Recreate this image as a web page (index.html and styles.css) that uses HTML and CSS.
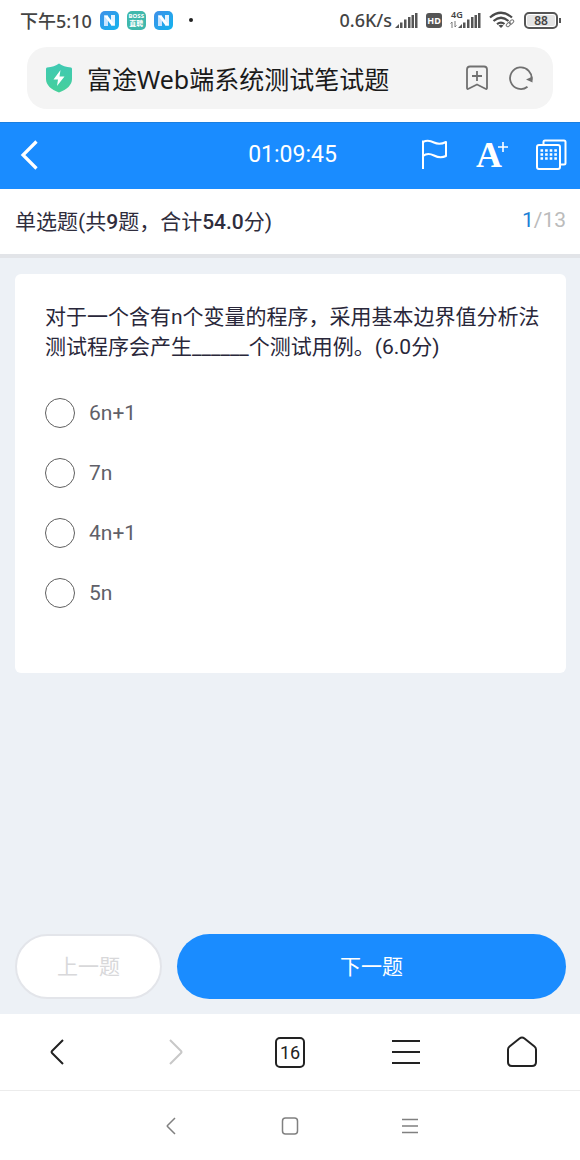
FILE: index.html
```html
<!DOCTYPE html>
<html lang="zh-CN">
<head>
  <meta charset="UTF-8">
  <title>富途Web端系统测试笔试题</title>
  <meta name="viewport" content="width=device-width, initial-scale=1">
  <link rel="stylesheet" href="styles.css">
</head>
<body>
  <svg class="defs" width="0" height="0" aria-hidden="true">
    <defs>
      <linearGradient id="blue" x1="0" y1="0" x2="1" y2="1">
        <stop offset="0" stop-color="#3f8fe8"/>
        <stop offset="1" stop-color="#12b4ee"/>
      </linearGradient>
      <linearGradient id="green" x1="0" y1="0" x2="0" y2="1">
        <stop offset="0" stop-color="#3fc9b4"/>
        <stop offset="1" stop-color="#45d09a"/>
      </linearGradient>
      <symbol id="app-n" viewBox="0 0 19 19">
        <rect width="19" height="19" rx="5" fill="url(#blue)"/>
        <path d="M4 4.500h4v10.500H4z" fill="#c9e4ff"/>
        <path d="M11 4h4v10.500h-4z" fill="#e6f3ff"/>
        <path d="M4 4.500h3.500l7.500 10h-3.500z" fill="#fff"/>
      </symbol>
      <symbol id="signal" viewBox="0 0 23 17">
        <path d="M0 16l4-4v4zM5 10.500h2.500V16H5zM9 7.500h2.500V16H9zM13 5h2.500v11H13zM16.500 3H19v13h-2.500zM20 1h2.500v15H20z" fill="#555"/>
      </symbol>
    </defs>
  </svg>

  <!-- Phone status bar -->
  <div class="status-bar">
    <div class="status-left">
      <span class="clock">下午5:10</span>
      <svg width="19" height="19"><use href="#app-n"/></svg>
      <span class="boss"><span>BOSS</span><span>直聘</span></span>
      <svg width="19" height="19"><use href="#app-n"/></svg>
      <span class="dot"></span>
    </div>
    <div class="status-right">
      <span class="speed">0.6K/s</span>
      <svg width="23" height="17"><use href="#signal"/></svg>
      <span class="hd">HD</span>
      <span class="mobile">
        <span class="net">4G</span>
        <svg class="arrows" width="7" height="7" viewBox="0 0 7 7"><path d="M2 7V1L.5 2.500M5 0v6l1.500-1.500" fill="none" stroke="#777" stroke-width="1"/></svg>
        <svg width="23" height="17"><use href="#signal"/></svg>
      </span>
      <svg class="wifi" width="27" height="18" viewBox="0 0 27 18" fill="none" stroke="#4a4a4a">
        <path d="M1 6.500Q12 -3 23 6.500M4.500 10Q12 3.500 19.500 10M8 13.200Q12 10 15.500 13" stroke-width="2.200"/>
        <path d="M9.500 14.500Q12 13 14.500 14.500L12 17z" fill="#4a4a4a" stroke="none"/>
        <rect x="17" y="12" width="5" height="3" rx="1.500" transform="rotate(-42 19.500 13.500)" stroke="#777" stroke-width="1"/>
        <rect x="20" y="9.500" width="5" height="3" rx="1.500" transform="rotate(-42 22.500 11)" stroke="#777" stroke-width="1"/>
      </svg>
      <span class="battery"><span class="level">88</span></span>
    </div>
  </div>

  <!-- Browser address bar -->
  <div class="address">
    <svg width="28" height="30" viewBox="0 0 28 30">
      <path d="M14 0.500C17 3 21 4 26 4.500q1 .2 1 1.500V16c0 6-5 10.500-13 13.500C6 26.500 1 22 1 16V6q0-1.300 1-1.500C7 4 11 3 14 .5z" fill="url(#green)"/>
      <path d="M15.500 7L8.500 16.500h4.500L12 23l7.500-9.500h-5z" fill="#fff"/>
    </svg>
    <span class="page-name">富途Web端系统测试笔试题</span>
    <button type="button" aria-label="添加书签">
      <svg width="24" height="26" viewBox="0 0 24 26" fill="none" stroke="#707070" stroke-width="1.800" stroke-linejoin="round">
        <path d="M5 1.500h14q3 0 3 3V23q0 1.500-1.500.7L12 19.500 3.500 23.700Q2 24.500 2 23V4.500q0-3 3-3z"/>
        <path d="M12 6v10M7 11h10"/>
      </svg>
    </button>
    <button type="button" aria-label="刷新">
      <svg width="24" height="24" viewBox="0 0 24 24">
        <path d="M18.500 20.700A10.800 10.800 0 1 1 22.500 14" fill="none" stroke="#707070" stroke-width="1.800"/>
        <path d="M17 13.500l6.500-3v6z" fill="#707070"/>
      </svg>
    </button>
  </div>

  <!-- Exam header -->
  <header class="exam-header">
    <button type="button" class="back" aria-label="返回">
      <svg width="20" height="32" viewBox="0 0 20 32" fill="none" stroke="#fff" stroke-width="3.200"><path d="M18.500 2.500L5 16l13.500 13.500"/></svg>
    </button>
    <time class="timer">01:09:45</time>
    <div class="tools">
      <button type="button" aria-label="标记">
        <svg width="27" height="31" viewBox="0 0 27 31" fill="none" stroke="#fff" stroke-width="2">
          <path d="M2 30V1.500M2 3c4-2 7-1.500 11 .5s8 1.500 12-.5v14c-4 2-8 1.500-12-.5s-8-2-11 .5" stroke-linejoin="round"/>
        </svg>
      </button>
      <button type="button" aria-label="字体放大" class="font-size">
        <span>A</span>
        <svg width="10" height="10" viewBox="0 0 10 10"><path d="M5 0v10M0 5h10" stroke="#fff" stroke-width="1.600"/></svg>
      </button>
      <button type="button" aria-label="答题卡">
        <svg width="31" height="31" viewBox="0 0 31 31" fill="none" stroke="#fff" stroke-width="2">
          <path d="M7.500 5V3q0-1.500 1.500-1.500h19q1.500 0 1.500 1.500v21q0 1.500-1.500 1.500h-3"/>
          <rect x="1" y="6" width="23" height="24" rx="2"/>
          <path d="M4.500 11.500h17M4.500 15.500h17M4.500 19.500h17" stroke-width="2.600" stroke-dasharray="2.600 2"/>
        </svg>
      </button>
    </div>
  </header>

  <div class="section-bar">
    <h1>单选题(共<b>9</b>题，合计<b>54.0</b>分)</h1>
    <span class="progress"><span class="current">1</span>/13</span>
  </div>

  <main>
    <form id="exam-form">
      <fieldset class="card">
        <legend>对于一个含有n个变量的程序，采用基本边界值分析法测试程序会产生______个测试用例。(6.0分)</legend>
        <div class="options">
          <label><input type="radio" name="answer" value="A">6n+1</label>
          <label><input type="radio" name="answer" value="B">7n</label>
          <label><input type="radio" name="answer" value="C">4n+1</label>
          <label><input type="radio" name="answer" value="D">5n</label>
        </div>
      </fieldset>
      <div class="actions">
        <button type="button" class="prev" disabled>上一题</button>
        <button type="button" class="next">下一题</button>
      </div>
    </form>
  </main>

  <!-- Browser toolbar -->
  <nav class="toolbar">
    <button type="button" aria-label="后退">
      <svg width="30" height="32" viewBox="0 0 30 32"><path d="M20 4L9 15q-1 1 0 2l11 11"/></svg>
    </button>
    <button type="button" aria-label="前进" class="muted">
      <svg width="30" height="32" viewBox="0 0 30 32"><path d="M11 4l11 11q1 1 0 2L11 28"/></svg>
    </button>
    <button type="button" aria-label="标签页"><span class="tabs">16</span></button>
    <button type="button" aria-label="菜单">
      <svg width="30" height="32" viewBox="0 0 30 32"><path d="M1 5h28M1 16h28M1 27h28"/></svg>
    </button>
    <button type="button" aria-label="主页">
      <svg width="30" height="32" viewBox="0 0 30 32"><path d="M12.500 2.500q2.500-2 5 0l10 8q1.500 1.200 1.500 3V26q0 4-4 4H5q-4 0-4-4V13.500q0-1.800 1.500-3z"/></svg>
    </button>
  </nav>

  <!-- System navigation -->
  <nav class="system-nav">
    <button type="button" aria-label="系统返回">
      <svg width="18" height="18" viewBox="0 0 18 18"><path d="M14 1L6.500 8.500q-.5.500 0 1L14 17"/></svg>
    </button>
    <button type="button" aria-label="桌面">
      <svg width="18" height="18" viewBox="0 0 18 18"><rect x="1.500" y="1" width="15" height="16" rx="3"/></svg>
    </button>
    <button type="button" aria-label="最近任务">
      <svg width="18" height="18" viewBox="0 0 18 18"><path d="M1 2.500h16M1 9h16M1 15.500h16"/></svg>
    </button>
  </nav>
</body>
</html>
```
FILE: styles.css
```css
* { box-sizing: border-box; }
body {
  margin: 0; min-height: 100vh; display: flex; flex-direction: column;
  font-family: Roboto, "Noto Sans CJK SC", sans-serif; font-size: 21px; background: #fff; color: #2f2d3d;
}
button { padding: 0; border: none; background: none; font: inherit; color: inherit; cursor: pointer; }
svg { display: block; flex: none; }
.defs { position: absolute; }

/* status bar */
.status-bar {
  display: flex; justify-content: space-between; align-items: center; height: 40px; padding: 0 22px 0 20px;
  font-family: "Noto Sans", "Noto Sans CJK SC", sans-serif; color: #444;
}
.status-left, .status-right { display: flex; align-items: center; }
.status-left { gap: 8px; }
.status-right { gap: 8px; }
.clock { font-size: 18px; font-weight: 500; }
.speed { font-size: 18px; font-weight: 500; margin-right: -5px; }
.boss {
  display: flex; flex-direction: column; align-items: center; justify-content: center; width: 19px; height: 19px;
  border-radius: 5px; background: #3fb8ac; color: #fff; font-size: 6px; line-height: 7px; font-weight: 700;
}
.boss span + span { font-size: 7px; }
.dot { width: 4px; height: 4px; margin-left: 8px; border-radius: 50%; background: #222; }
.hd { width: 16px; height: 15px; border-radius: 3px; background: #555; color: #fff; font-size: 9px; line-height: 15px; font-weight: 700; text-align: center; }
.mobile { position: relative; padding-left: 8px; }
.net { position: absolute; left: 1px; top: -2px; font-size: 9px; line-height: 10px; font-weight: 600; }
.arrows { position: absolute; left: 0; bottom: 1px; }
.battery { position: relative; width: 34px; height: 17px; padding: 1px; border: 2px solid #555; border-radius: 5px; }
.battery::after { content: ""; position: absolute; right: -5px; top: 4px; width: 2px; height: 5px; background: #555; }
.level { display: block; border-radius: 2px; background: #e4e4e4; font-size: 12px; line-height: 11px; font-weight: 600; text-align: center; }

/* address bar */
.address {
  display: flex; align-items: center; gap: 20px; height: 62px; margin: 7px 27px 13px; padding: 0 20px 0 18px;
  border-radius: 20px; background: #f4f4f4;
}
.page-name { flex: 1; margin-left: -6px; font-family: "Noto Sans", "Noto Sans CJK SC", sans-serif; font-size: 25px; color: #1a1a1a; white-space: nowrap; }

/* exam header */
.exam-header {
  display: grid; grid-template-columns: 1fr auto 1fr; align-items: center; height: 67px; padding: 0 13px 3px 18px;
  border-top: 1px solid #1a7fe0; background: #1a8cff; color: #fff;
}
.back { justify-self: start; }
.timer { font-size: 23px; }
.tools { display: flex; justify-content: flex-end; align-items: center; gap: 28px; }
.font-size { display: flex; width: 32px; font-family: "Liberation Serif", serif; font-size: 36px; line-height: 32px; font-weight: 700; }
.font-size svg { margin: 3px 0 0 -4px; }

/* section title */
.section-bar {
  display: flex; justify-content: space-between; align-items: center; height: 69px; padding: 0 14px 4px 15px;
  border-bottom: 4px solid #e2e4e8;
}
h1 { margin: 0; font-size: 21px; font-weight: 400; }
h1 b { font-weight: 500; }
.progress { color: #bbb; }
.current { color: #1c7fd6; }

/* question */
main, form { flex: 1; display: flex; flex-direction: column; }
main { padding: 16px 14px 15px 15px; background: #edf1f6; }
.card { margin: 0; min-width: 0; padding: 28px 24px 65px 30px; border: none; border-radius: 6px; background: #fff; }
legend { float: left; width: 100%; padding: 0; line-height: 30px; color: #29273a; }
.options { clear: both; display: flex; flex-direction: column; gap: 30px; padding-top: 36px; }
.options label { display: flex; align-items: center; gap: 14px; height: 30px; color: #606068; }
.options input { appearance: none; width: 30px; height: 30px; margin: 0; border: 1px solid #606060; border-radius: 50%; background: #fff; }
.options input:checked { border: 9px solid #1a8cff; }
.actions { display: flex; gap: 15px; margin-top: auto; }
.actions button { height: 65px; padding-bottom: 3px; border-radius: 33px; }
.prev { width: 147px; border: 2px solid #e3e5ea; background: #fff; color: #d8d8da; }
.next { flex: 1; background: #1a8cff; color: #fff; }

/* bottom bars */
.toolbar { display: grid; grid-template-columns: repeat(5, 1fr); height: 77px; border-bottom: 1px solid #ececec; }
.toolbar button, .system-nav button { display: flex; align-items: center; justify-content: center; }
.toolbar svg { fill: none; stroke: #222; stroke-width: 2; }
.toolbar .muted svg { stroke: #c8c8c8; }
.tabs { width: 30px; height: 31px; border: 2px solid #222; border-radius: 5px; font-size: 18px; line-height: 28px; text-align: center; color: #222; }
.system-nav { display: grid; grid-template-columns: repeat(3, 120px); justify-content: center; height: 69px; }
.system-nav svg { fill: none; stroke: #808080; stroke-width: 1.5; }
```
